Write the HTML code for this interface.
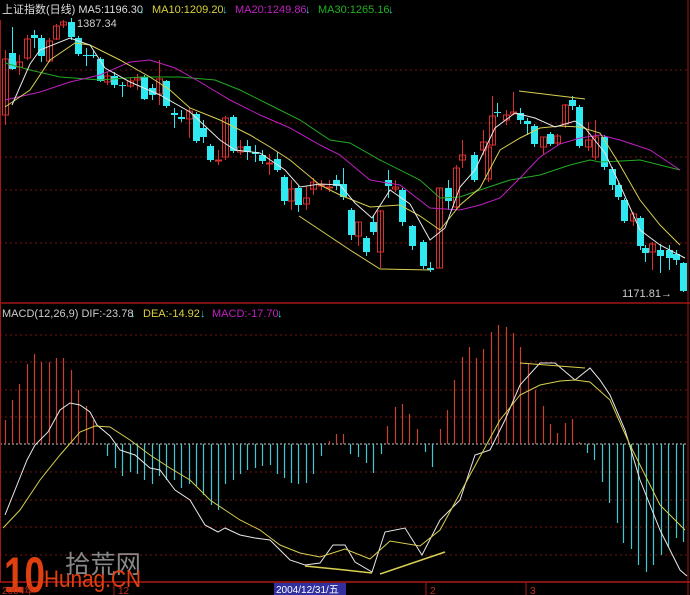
<!DOCTYPE html>
<html><head><meta charset="utf-8"><style>
html,body{margin:0;padding:0;background:#000;width:690px;height:595px;overflow:hidden}
svg{display:block}
text{font-family:"Liberation Sans","Noto Sans CJK SC",sans-serif}
</style></head><body>
<svg id="s" width="690" height="595" viewBox="0 0 690 595" xmlns="http://www.w3.org/2000/svg">
<rect width="690" height="595" fill="#000"/>
<g id="grid" stroke="#7a1414" stroke-width="1" stroke-dasharray="2,3">
<line x1="0" y1="70" x2="688" y2="70"/><line x1="0" y1="123" x2="688" y2="123"/>
<line x1="0" y1="157" x2="688" y2="157"/><line x1="0" y1="190" x2="688" y2="190"/>
<line x1="0" y1="243" x2="688" y2="243"/>
<line x1="0" y1="335" x2="688" y2="335"/><line x1="0" y1="362" x2="688" y2="362"/>
<line x1="0" y1="390" x2="688" y2="390"/><line x1="0" y1="417" x2="688" y2="417"/>
<line x1="0" y1="472" x2="688" y2="472"/><line x1="0" y1="500" x2="688" y2="500"/>
<line x1="0" y1="527" x2="688" y2="527"/><line x1="0" y1="555" x2="688" y2="555"/>
</g>
<line x1="0" y1="444" x2="688" y2="444" stroke="#ccc" stroke-dasharray="2,2"/>
<line x1="0" y1="303" x2="690" y2="303" stroke="#a01818" stroke-width="1.5"/>
<line x1="0" y1="582" x2="690" y2="582" stroke="#b01818" stroke-width="1.5"/>
<line x1="688" y1="0" x2="688" y2="595" stroke="#a01818"/>
<line x1="0.5" y1="20" x2="0.5" y2="582" stroke="#a01818"/>
<g id="c"></g>
<g fill="none" stroke-width="1">
<polyline stroke="#22aa22" points="5,63 30,70 60,77 100,80 140,77 180,77 215,80 240,90 270,105 300,120 330,140 350,143 380,160 420,180 440,198 460,197 480,190 510,180 540,175 570,165 590,160 600,162 640,160 680,170"/>
<polyline stroke="#c020c0" points="5,100 40,92 70,82 100,75 130,62 150,60 175,68 200,82 230,100 260,115 290,128 320,145 340,155 370,180 400,185 430,208 460,210 480,205 500,198 520,178 540,157 560,144 580,138 600,135 620,140 650,150 680,170"/>
<polyline stroke="#d8d050" points="5,107 30,90 50,60 75,43 90,45 120,60 150,77 170,90 190,108 220,120 250,135 270,147 290,160 320,185 340,195 370,207 400,205 420,216 440,230 460,205 480,188 500,150 520,138 540,128 560,126 580,127 600,133 620,165 640,200 660,225 680,245"/>
<polyline stroke="#e8e8e8" points="12,105 30,64 40,50 70,38 90,45 105,68 130,82 160,95 190,112 220,140 235,150 260,153 285,170 300,187 320,184 340,185 355,203 372,218 390,190 410,204 430,240 445,228 460,187 475,170 495,128 515,113 535,118 555,127 575,121 585,128 605,153 620,185 640,230 660,245 685,258"/>
<polyline stroke="#d8d050" points="299,216 350,250 380,269 430,270"/>
<polyline stroke="#d8d050" points="519,91 585,99"/>
<polyline stroke="#e8e8e8" points="5,515 15,490 27,460 35,445 48,432 60,410 70,403 80,405 90,412 97,425 110,436 120,450 135,455 150,468 160,470 175,490 190,500 205,525 218,532 225,528 240,535 255,538 270,540 280,550 290,560 305,565 320,563 333,545 345,545 355,562 372,572 385,532 405,528 422,555 440,520 460,500 475,455 490,450 505,420 520,385 540,363 555,363 575,380 590,368 600,380 610,395 625,430 640,480 660,530 680,570 687,576"/>
<polyline stroke="#d8d050" points="3,528 20,510 40,480 60,455 80,432 95,426 110,427 130,440 150,455 170,468 190,480 210,500 225,510 240,520 260,530 280,545 300,553 320,557 345,549 370,559 390,541 420,546 440,530 470,475 500,420 520,395 540,385 560,381 575,380 590,382 610,400 630,445 660,505 685,530"/>
<polyline stroke="#d8d050" stroke-width="1.5" points="305,566 345,570 372,573"/>
<polyline stroke="#d8d050" stroke-width="1.5" points="380,574 445,552"/>
<polyline stroke="#d8d050" points="520,363 585,368"/>
</g>
<text x="2" y="13" font-size="11" fill="#ddd">上证指数(日线) MA5:1196.30</text>
<text x="152" y="13" font-size="11" fill="#d8d040">MA10:1209.20</text>
<text x="235" y="13" font-size="11" fill="#c020c0">MA20:1249.86</text>
<text x="318" y="13" font-size="11" fill="#20b020">MA30:1265.16</text>
<g fill="#3cc" font-size="11"><text x="139" y="13">↓</text><text x="222" y="13">↓</text><text x="305" y="13">↓</text><text x="388" y="13">↓</text>
<text x="130" y="317">↓</text><text x="200" y="317">↓</text><text x="277" y="317">↓</text></g>
<text x="77" y="27" font-size="11" fill="#ccc">1387.34</text>
<text x="622" y="297" font-size="11" fill="#ccc">1171.81→</text>
<text x="2" y="317" font-size="11" fill="#ccc">MACD(12,26,9) DIF:-23.78</text>
<text x="143" y="317" font-size="11" fill="#d8d040">DEA:-14.92</text>
<text x="212" y="317" font-size="11" fill="#c020c0">MACD:-17.70</text>
<text x="65" y="573" font-size="25" fill="#888" textLength="76" lengthAdjust="spacingAndGlyphs">拾荒网</text>
<text x="4" y="592" font-size="50" font-weight="bold" fill="#e04010" textLength="41" lengthAdjust="spacingAndGlyphs">10</text>
<text x="44" y="587" font-size="24" fill="#e04010" textLength="97" lengthAdjust="spacingAndGlyphs">Hunag.CN</text>
<rect x="274" y="583" width="72" height="12" fill="#3030a0"/>
<text x="276" y="593" font-size="10" fill="#fff">2004/12/31/五</text>
<g font-size="10" fill="#c03020"><text x="2" y="594">2004年</text><text x="118" y="594">12</text><text x="430" y="594">2</text><text x="530" y="594">3</text></g>
<g stroke="#b01818"><line x1="114" y1="582" x2="114" y2="595"/><line x1="426" y1="582" x2="426" y2="595"/><line x1="526" y1="582" x2="526" y2="595"/></g>
</svg>
<script>
var R="#d83030",C="#30e8f0",g=document.getElementById('c'),h='';
var K=[[5,'r',59,115,50,125],[12,'c',53,69,27,70],[19,'r',62,67,55,75],[27,'r',39,58,35,60],[34,'c',35,38,30,48],[41,'c',38,56,35,62],[49,'r',41,61,38,62],[56,'r',26,39,24,40],[63,'r',22,25,20,28],[71,'c',22,37,18,40],[78,'c',38,54,36,56],[86,'c',55,56,48,66],[93,'c',55,56,50,58],[100,'c',59,81,57,82],[107,'r',76,82,72,85],[114,'c',76,85,72,88],[122,'c',85,86,82,97],[130,'r',81,86,77,88],[137,'r',78,80,74,90],[144,'c',77,99,75,100],[152,'c',88,95,84,100],[159,'r',79,94,60,105],[166,'c',81,106,80,108],[174,'c',113,115,108,128],[181,'c',117,119,110,122],[189,'r',111,119,108,138],[196,'c',114,141,112,143],[203,'c',128,137,120,143],[210,'c',146,160,144,162],[218,'r',160,161,150,165],[225,'r',118,157,116,160],[233,'c',117,151,115,153],[240,'r',147,152,140,155],[247,'c',146,152,140,160],[255,'c',152,154,145,162],[262,'c',155,161,150,164],[269,'r',163,164,154,175],[277,'c',159,170,152,172],[284,'c',177,201,175,205],[291,'r',189,201,180,210],[298,'c',188,205,186,212],[306,'r',198,204,186,210],[313,'r',182,189,178,195],[321,'r',185,186,180,190],[329,'r',187,188,180,192],[336,'c',180,186,175,190],[343,'c',184,197,168,200],[351,'c',210,235,208,240],[358,'r',222,236,222,246],[366,'c',238,252,236,256],[373,'c',222,232,215,235],[380,'r',211,252,210,268],[388,'c',180,186,170,198],[395,'r',187,189,180,192],[402,'c',190,222,188,226],[412,'c',226,246,225,250],[423,'c',242,266,240,269],[430,'c',268,270,262,272],[439,'r',188,268,188,268],[448,'c',188,201,180,210],[456,'r',168,207,165,210],[462,'r',155,160,140,168],[474,'c',155,180,152,182],[483,'r',142,150,130,155],[488,'r',147,179,145,182],[492,'r',116,145,96,146],[497,'c',112,113,103,117],[506,'r',115,120,110,125],[513,'r',112,114,92,115],[520,'c',113,120,108,124],[527,'c',121,124,118,135],[534,'c',126,144,124,147],[543,'r',137,147,137,155],[550,'c',134,144,132,146],[557,'r',136,143,134,145],[565,'r',105,124,104,128],[572,'c',100,106,96,110],[579,'c',107,146,105,148],[588,'r',140,147,122,151],[595,'r',137,157,120,160],[604,'c',137,167,135,170],[612,'c',169,185,167,190],[618,'c',185,197,183,200],[624,'c',200,221,198,223],[633,'r',214,221,212,226],[640,'c',218,246,216,250],[645,'c',248,253,245,262],[652,'r',244,252,242,270],[660,'c',250,256,244,273],[669,'c',250,258,245,270],[676,'c',254,260,250,265],[683,'c',263,291,262,292]];
K.forEach(function(k){var x=k[0],col=k[1]=='r'?R:C,t=k[2],b=Math.max(k[3],t+1);
h+='<line x1="'+(x+.5)+'" y1="'+k[4]+'" x2="'+(x+.5)+'" y2="'+k[5]+'" stroke="'+col+'"/>';
if(k[1]=='r')h+='<rect x="'+(x-2.5)+'" y="'+t+'" width="6" height="'+(b-t)+'" fill="none" stroke="'+R+'"/>';
else h+='<rect x="'+(x-3)+'" y="'+t+'" width="7" height="'+(b-t)+'" fill="'+C+'"/>';});
var M=[[5,420],[12,400],[19,384],[27,364],[34,354],[41,362],[49,362],[56,358],[63,358],[71,370],[78,390],[86,406],[93,420],[107,456],[115,468],[122,476],[130,472],[137,474],[144,480],[152,484],[159,476],[166,480],[174,480],[181,488],[189,484],[196,486],[203,495],[211,505],[218,510],[225,484],[233,480],[240,474],[247,470],[255,468],[262,466],[270,465],[277,474],[284,478],[291,483],[298,484],[306,483],[313,474],[321,456],[329,441],[336,434],[343,434],[350,454],[358,457],[366,463],[373,473],[381,454],[387,426],[395,407],[402,404],[409,414],[417,429],[425,452],[432,467],[440,429],[447,410],[454,380],[462,357],[469,347],[476,358],[483,349],[491,332],[498,325],[506,327],[513,333],[520,347],[528,363],[535,390],[543,406],[550,424],[557,433],[565,423],[572,419],[579,442],[587,453],[594,460],[602,482],[609,503],[617,523],[623,543],[631,549],[638,565],[646,572],[653,565],[661,555],[668,547],[676,538],[683,542]];
M.forEach(function(m){var c=m[1]<444?'#c84030':'#40c8d0';h+='<line x1="'+(m[0]+.5)+'" y1="444" x2="'+(m[0]+.5)+'" y2="'+m[1]+'" stroke="'+c+'" stroke-width="1.2"/>';});
g.innerHTML=h;
</script>
</body></html>
